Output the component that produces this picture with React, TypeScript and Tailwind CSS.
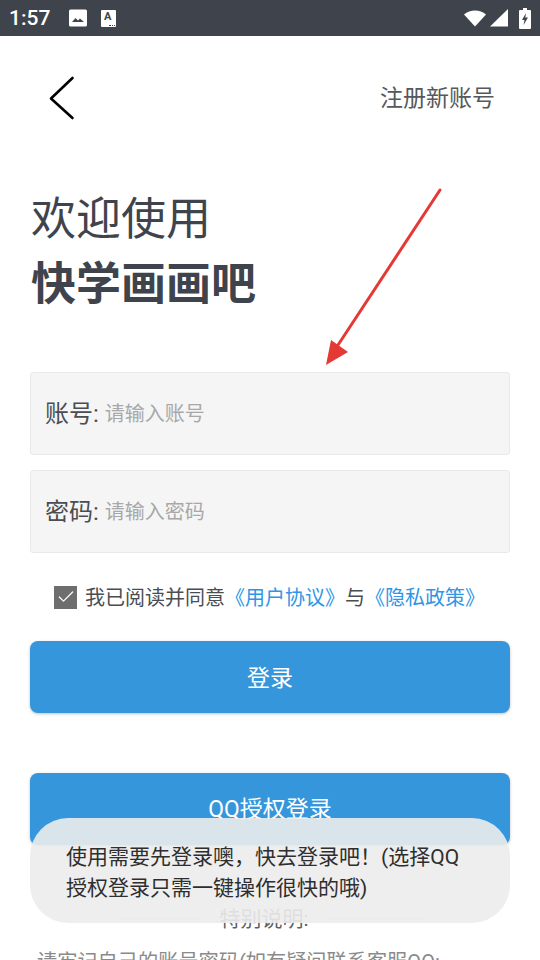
import { Check } from 'lucide-react'

const cjk = { fontFamily: 'Roboto, "Noto Sans CJK SC", "Noto Sans", sans-serif' }

function StatusBar() {
  return (
    <div className="h-9 bg-[#3f444c] flex items-center text-white shrink-0">
      <span className="ml-[9px] mt-[1px] text-[21px] font-medium leading-none w-[42px]">1:57</span>
      <svg className="ml-[18px]" width="18" height="18" viewBox="0 0 18 18">
        <rect width="18" height="17" y="0.5" rx="1.5" fill="#fff" />
        <path d="M3 13l3.500-4 2.500 2.500 2-2 4 3.500z" fill="#3f444c" />
      </svg>
      <div className="ml-[14px] w-[15px] h-[17px] bg-white rounded-[1px] relative overflow-hidden">
        <span className="absolute left-[3px] top-[1px] text-[11px] leading-[12px] font-bold text-[#3f444c]">A</span>
        <span className="absolute left-[8px] bottom-[1px] w-[6px] border-b border-dotted border-[#3f444c]" />
      </div>
      <svg className="ml-auto" width="24" height="18" viewBox="0 0 24 18">
        <path d="M1 5.500C4 3 8 1.500 12 1.500S20 3 23 5.500L12 17.500z" fill="#fff" />
      </svg>
      <svg className="ml-[3px]" width="18" height="18" viewBox="0 0 18 18">
        <path d="M0 17.500L18 0v17.500z" fill="#fff" />
      </svg>
      <svg className="ml-[11px] mr-[9px]" width="12" height="21" viewBox="0 0 12 21">
        <path d="M4 0h4v2h3a1 1 0 0 1 1 1v17a1 1 0 0 1-1 1H1a1 1 0 0 1-1-1V3a1 1 0 0 1 1-1h3z" fill="#fff" />
        <path d="M7 5L3 12h2.500L4.500 17 9 9.500H6.300z" fill="#3f444c" />
      </svg>
    </div>
  )
}

function Field({ label, placeholder, className }: { label: string; placeholder: string; className?: string }) {
  return (
    <div className={`h-[83px] bg-[#f5f5f5] border border-[#e9e9e9] rounded-[3px] flex items-center pl-[14px] ${className ?? ''}`}>
      <span className="text-[24px] text-[#4a4d52] leading-none">{label}:</span>
      <span className="ml-[6px] text-[20px] text-[#a8a8a8] leading-none">{placeholder}</span>
    </div>
  )
}

export default function App() {
  return (
    <div className="relative w-[540px] h-[960px] overflow-hidden bg-white flex flex-col" style={cjk}>
      <StatusBar />

      <div className="h-[123px] flex items-center justify-between pl-[48px] pr-[45px] shrink-0">
        <svg width="28" height="44" viewBox="0 0 28 44" fill="none" stroke="#000" strokeWidth="2.600" strokeLinecap="round" strokeLinejoin="round">
          <path d="M24.500 2L3 22.500 24.500 42" />
        </svg>
        <span className="mt-[1px] text-[23px] text-[#55585c] leading-none">注册新账号</span>
      </div>

      <div className="pl-[31px] mt-[29px] text-[#3f444c] shrink-0">
        <div className="text-[45px] leading-[64px]">欢迎使用</div>
        <div className="text-[45px] leading-[65px] font-bold">快学画画吧</div>
      </div>

      <div className="px-[30px] mt-[55px] shrink-0">
        <Field label="账号" placeholder="请输入账号" />
        <Field label="密码" placeholder="请输入密码" className="mt-[15px]" />

        <div className="flex items-center mt-[32px] ml-[24px] h-[24px]">
          <div className="w-[23px] h-[23px] bg-[#6e6e6e] flex items-center justify-center">
            <Check size={20} color="#fff" strokeWidth={1.500} />
          </div>
          <span className="ml-[8px] mt-[2px] text-[20px] leading-none text-[#4a4d52] whitespace-nowrap">
            我已阅读并同意
            <span className="text-[#2f96e6]">《用户协议》</span>
            与
            <span className="text-[#2f96e6]">《隐私政策》</span>
          </span>
        </div>

        <button className="block w-full h-[72px] mt-[32px] pt-[4px] bg-[#3596dc] rounded-[8px] text-white text-[23px] shadow-[0_1px_3px_rgba(0,0,0,0.25)]">登录</button>
        <button className="block w-full h-[72px] mt-[60px] pt-[3px] bg-[#3596dc] rounded-[8px] text-white text-[23px] shadow-[0_1px_3px_rgba(0,0,0,0.25)]">QQ授权登录</button>

        <div className="flex items-center justify-center mt-[56px] text-[#5f5f5f]">
          <div className="w-[90px] h-px bg-[#e5e5e5]" />
          <span className="mx-[15px] text-[21px] leading-[36px]">特别说明:</span>
          <div className="w-[102px] h-px bg-[#e5e5e5]" />
        </div>
        <p className="mt-[10px] ml-[7px] text-[20.2px] leading-[30px] text-[#8a8a8a] whitespace-nowrap">请牢记自己的账号密码(如有疑问联系客服QQ:</p>
      </div>

      {/* red arrow drawn on top of the screenshot */}
      <svg className="absolute left-[320px] top-[185px]" width="125" height="185" viewBox="0 0 125 185" fill="#e53935" stroke="none">
        <path d="M120 5L18 160" stroke="#e53935" strokeWidth="3" strokeLinecap="round" fill="none" />
        <path d="M6 180L11 155 28 167z" />
      </svg>

      {/* toast sits over the page */}
      <div className="absolute left-[30px] top-[818px] w-[480px] h-[105px] rounded-[38px] bg-[rgba(236,236,236,0.9)] pl-[36px] pt-[24px] text-[21px] leading-[31px] text-[#2e2e2e] whitespace-nowrap">
        使用需要先登录噢，快去登录吧！(选择QQ<br />授权登录只需一键操作很快的哦)
      </div>
    </div>
  )
}
